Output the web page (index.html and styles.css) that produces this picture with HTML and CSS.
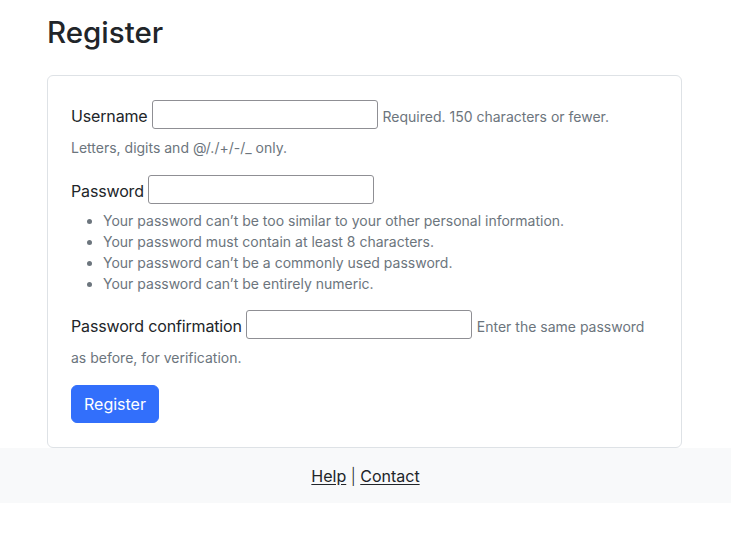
FILE: index.html
```html
<!DOCTYPE html>
<html lang="en">
<head>
<meta charset="utf-8">
<title>Register</title>
<link rel="stylesheet" href="styles.css">
</head>
<body>
<main class="container">
  <h1 class="title">Register</h1>
  <div class="card">
    <form class="card-body">
      <p class="field">
        <label for="id_username" class="label">Username</label>
        <input type="text" id="id_username" class="input">
        <span class="helptext">Required. 150 characters or fewer. Letters, digits and @/./+/-/_ only.</span>
      </p>
      <div class="field">
        <label for="id_password1" class="label">Password</label>
        <input type="password" id="id_password1" class="input">
        <ul class="helplist">
          <li>Your password can’t be too similar to your other personal information.</li>
          <li>Your password must contain at least 8 characters.</li>
          <li>Your password can’t be a commonly used password.</li>
          <li>Your password can’t be entirely numeric.</li>
        </ul>
      </div>
      <p class="field">
        <label for="id_password2" class="label">Password confirmation</label>
        <input type="password" id="id_password2" class="input">
        <span class="helptext">Enter the same password as before, for verification.</span>
      </p>
      <button type="submit" class="btn">Register</button>
    </form>
  </div>
</main>
<footer class="footer">
  <a href="#">Help</a> <span class="sep">|</span> <a href="#">Contact</a>
</footer>
</body>
</html>
```
FILE: styles.css
```css
* { box-sizing: border-box; }
html, body { margin: 0; padding: 0; }
body {
  font-family: Inter, "Noto Sans", "Liberation Sans", sans-serif;
  font-size: 16px;
  line-height: 1.5;
  color: #212529;
  background: #fff;
}
.container {
  margin: 0 49px 0 47px;
  padding-top: 14px;
}
.title {
  margin: 0 0 25px 0;
  font-size: 29.5px;
  font-weight: 500;
  line-height: 36px;
  color: #212529;
}
.card {
  border: 1px solid #dee2e6;
  border-radius: 6px;
  background: #fff;
}
.card-body {
  display: block;
  padding: 24px 23px 24px 23px;
}
.field { margin: 0 0 16px 0; }
.label { letter-spacing: -0.15px; }
.input {
  display: inline-block;
  width: 226px;
  height: 29px;
  margin: 0 0 6px 0;
  border: 1px solid #8f8f94;
  border-radius: 3px;
  padding: 0 4px;
  font: inherit;
  font-size: 14px;
  vertical-align: 2px;
  background: #fff;
}
.helptext {
  font-size: 14px;
  color: #6c757d;
  line-height: 1.5;
}
.helplist {
  margin: 0 0 16px 0;
  padding-left: 32px;
  font-size: 14px;
  color: #6c757d;
  line-height: 21px;
}
.btn {
  display: inline-block;
  height: 38px;
  padding: 6px 12px;
  font: inherit;
  font-size: 16px;
  line-height: 24px;
  color: #fff;
  background: #326ffb;
  border: 1px solid #326ffb;
  border-radius: 6px;
}
.footer {
  background: #f8f9fa;
  text-align: center;
  padding: 16px 0 15px 0;
  color: #212529;
}
.footer a { color: #212529; text-decoration: underline; text-underline-offset: 2px; }
.sep { font-weight: 300; }
```
